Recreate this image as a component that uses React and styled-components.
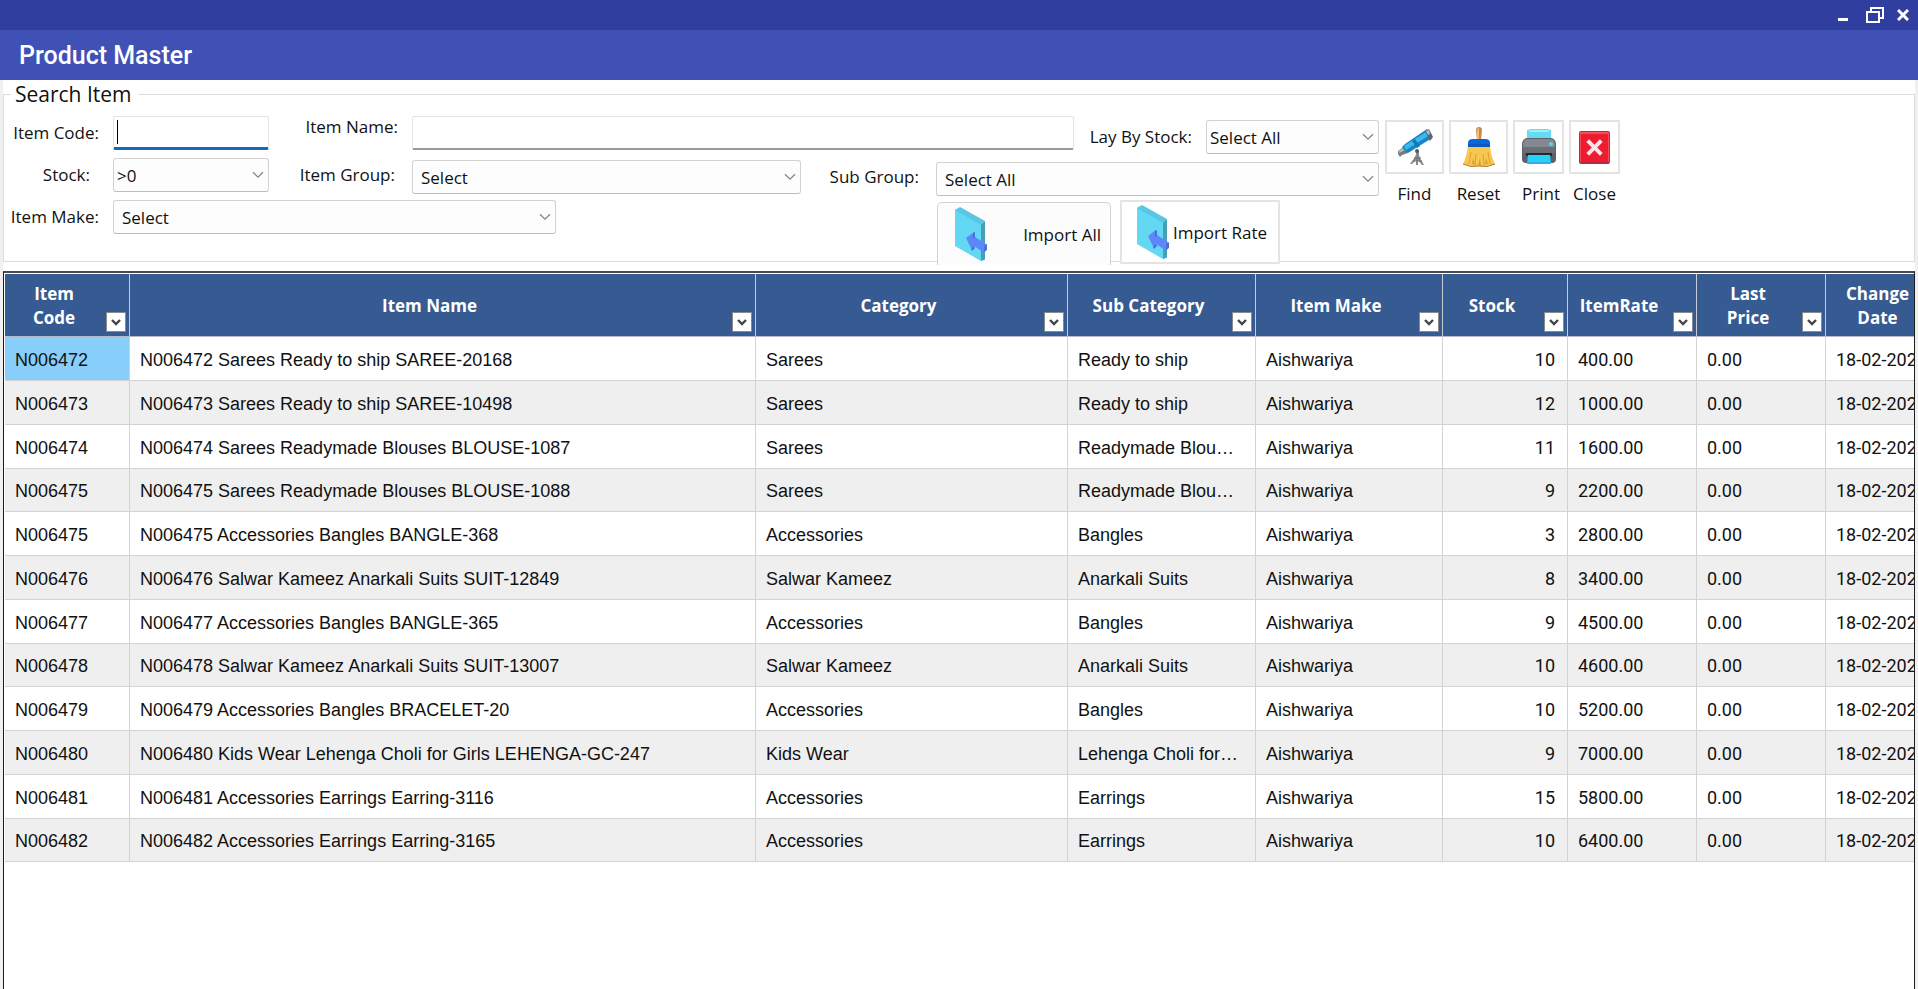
import React from "react";
import styled, { createGlobalStyle } from "styled-components";

const GlobalStyle = createGlobalStyle`
  *, *::before, *::after { box-sizing: border-box; }
  body {
    margin: 0;
    background: #f0f0f0;
    color: #111;
    font-family: "Open Sans", "Noto Sans", sans-serif;
    font-size: 17px;
  }
  button, input, select { font: inherit; color: inherit; }
`;

const Window = styled.div`
  display: flex;
  flex-direction: column;
  min-height: 100vh;
  overflow: hidden;
`;

const TitleBar = styled.div`
  display: flex;
  justify-content: flex-end;
  align-items: center;
  height: 30px;
  background: #303f9f;
`;

const WindowButton = styled.button`
  display: flex;
  align-items: center;
  justify-content: center;
  width: ${(p) => p.$width}px;
  height: 30px;
  padding: 0;
  border: 0;
  background: none;
  color: #fff;
`;

const AppBar = styled.header`
  display: flex;
  align-items: center;
  height: 50px;
  padding: 2px 19px 0;
  background: #3f51b5;
`;

const Title = styled.h1`
  margin: 0;
  color: #fff;
  font-family: Roboto, sans-serif;
  font-size: 25px;
  font-weight: 500;
  line-height: 30px;
`;

const Body = styled.main`
  flex: 1;
  display: flex;
  flex-direction: column;
  margin: 0 3px;
  background: #fff;
`;

const SearchPanel = styled.fieldset`
  margin: 0;
  min-width: 0;
  padding: 8px 0 0;
  border: 1px solid #dcdcdc;
`;

const Legend = styled.legend`
  margin-left: 7px;
  padding: 1px 6px 0 4px;
  font-size: 21px;
  line-height: 27px;
`;

const SearchForm = styled.form`
  display: flex;
  gap: 6px;
`;

const Filters = styled.div`
  flex: 0 1 1375px;
  min-width: 0;
  display: grid;
  grid-template-columns: 109px 156px 143px minmax(120px, 1fr) 135px 138px 132px 173px;
  grid-template-rows: 38px 38px 61px;
  row-gap: 4px;
`;

const Label = styled.label`
  grid-column: ${(p) => p.$column};
  align-self: ${(p) => p.$align || "start"};
  padding-right: ${(p) => p.$inset || 14}px;
  line-height: ${(p) => p.$line || 34}px;
  text-align: right;
  white-space: nowrap;
`;

const Field = styled.div`
  position: relative;
  grid-column: ${(p) => p.$column};
  align-self: ${(p) => p.$align || "start"};
  height: 34px;
  max-width: ${(p) => p.$max || "none"};
`;

const TextInput = styled.input`
  display: block;
  width: 100%;
  height: 34px;
  padding: 0 5px;
  border: 1px solid #e3e3e3;
  border-bottom: ${(p) => (p.$active ? "3px solid #0f6cbd" : "2px solid #999")};
  border-radius: 2px;
  outline: 0;
  background: #fff;
  caret-color: transparent;
`;

const Caret = styled.span`
  position: absolute;
  left: 4px;
  top: 4px;
  width: 1px;
  height: 24px;
  background: #000;
`;

const SelectBox = styled.select`
  appearance: none;
  display: block;
  width: 100%;
  height: 34px;
  padding: 0 28px 0 ${(p) => p.$pad}px;
  border: 1px solid #d2d2d2;
  border-bottom-color: #bdbdbd;
  border-radius: 3px;
  background: #fdfdfd;
`;

const SelectArrow = styled.svg`
  position: absolute;
  right: 5px;
  top: 13px;
  pointer-events: none;
`;

const ImportBar = styled.div`
  grid-column: 6 / 9;
  display: flex;
  align-items: flex-start;
  gap: 9px;
  padding-left: 1px;
`;

const ImportButton = styled.button`
  flex: none;
  display: flex;
  align-items: center;
  justify-content: space-between;
  width: ${(p) => p.$width}px;
  height: ${(p) => (p.$tab ? 63 : 64)}px;
  margin-top: ${(p) => (p.$tab ? 2 : 0)}px;
  padding: 0 ${(p) => (p.$tab ? 9 : 11)}px 0 ${(p) => (p.$tab ? 17 : 15)}px;
  border: ${(p) => (p.$tab ? 1 : 2)}px solid ${(p) => (p.$tab ? "#d2d2d2" : "#e4e4e4")};
  border-bottom-width: ${(p) => (p.$tab ? 0 : 2)}px;
  border-radius: ${(p) => (p.$tab ? "5px 5px 0 0" : "0")};
  background: ${(p) => (p.$tab ? "#fcfcfc" : "#fff")};
  white-space: nowrap;
`;

const Actions = styled.div`
  display: flex;
  align-items: flex-start;
  gap: 5px;
  padding-top: 4px;
`;

const Action = styled.div`
  display: flex;
  flex-direction: column;
  gap: 8px;
  width: ${(p) => p.$width}px;
  line-height: 24px;
`;

const ActionLabel = styled.span`
  padding-left: ${(p) => (p.$shifted ? 5 : 0)}px;
  text-align: center;
`;

const ActionButton = styled.button`
  display: flex;
  align-items: center;
  justify-content: center;
  width: 100%;
  height: 54px;
  padding: 0;
  border: 2px solid #e4e4e4;
  background: #fff;
`;

const GridFrame = styled.section`
  flex: 1;
  margin-top: 9px;
  padding: 1px 0 0 1px;
  overflow: hidden;
  border: 1px solid #1c1c1c;
  border-top: 2px solid #4a4a4a;
  border-bottom: 0;
`;

const Table = styled.table`
  width: calc(100% + 42px);
  table-layout: fixed;
  border-collapse: separate;
  border-spacing: 0;
`;

const HeadCell = styled.th`
  height: 63px;
  padding: 0;
  border-right: 1px solid #c8ccd6;
  border-bottom: 1px solid #b4b9c6;
  background: #365a92;
  color: #fff;
  font-size: 17px;
  font-weight: 700;
  line-height: 24px;
`;

const HeadInner = styled.div`
  display: flex;
  align-items: flex-end;
  height: 62px;
  padding: 0 3px 4px;
`;

const HeadText = styled.span`
  flex: 1;
  align-self: center;
  padding: 6px 8px 0 2px;
  white-space: nowrap;
`;

const FilterButton = styled.button`
  flex: none;
  display: flex;
  align-items: center;
  justify-content: center;
  width: 20px;
  height: 20px;
  padding: 1px 0 0;
  border: 1px solid #8a8a8a;
  background: #fff;
`;

const Row = styled.tr`
  height: 44px;
  background: #fff;
  &:nth-child(even) { background: #efefef; }
  &:nth-child(4n) { height: 43px; }
`;

const Cell = styled.td`
  padding: 2px 12px 0 10px;
  overflow: hidden;
  border-right: 1px solid #d3d3d3;
  border-bottom: 1px solid #d3d3d3;
  background: ${(p) => (p.$selected ? "#87cefa" : "transparent")};
  font-family: ${(p) => (p.$numeric ? "Roboto" : '"Liberation Sans"')}, sans-serif;
  font-size: 18px;
  line-height: 24px;
  text-align: ${(p) => p.$end ? "right" : "left"};
  text-overflow: ellipsis;
  white-space: nowrap;
`;

function Select({ id, column, align, max, pad = 8, children }) {
  return (
    <Field $column={column} $align={align} $max={max}>
      <SelectBox id={id} $pad={pad}>
        <option>{children}</option>
      </SelectBox>
      <SelectArrow width="12" height="8" viewBox="0 0 12 8" aria-hidden="true">
        <path d="M1 1.2 6 6.2 11 1.2" fill="none" stroke="#858585" strokeWidth="1.3" />
      </SelectArrow>
    </Field>
  );
}

function DoorIcon() {
  return (
    <svg width="32" height="54" viewBox="0 0 32 54" aria-hidden="true">
      <path d="M0 3 5 1 30 15v38l-4 1L0 39Z" fill="#63d8f3" />
      <path d="M0 3 5 0 30 14l-4 4Z" fill="#59c6e3" />
      <path d="M26 18 30 14v38l-4 2Z" fill="#489eb6" />
      <path d="M11 31 19 25l1 5 11 7v7l-3 1-9-6-2 4Z" fill="#5e86fb" />
      <path d="m18 26 2-1v6l-2 1Zm11 13 3-2v6l-3 2ZM16 42l3-3 1 2-3 3Z" fill="#4c6edb" />
    </svg>
  );
}

function TelescopeIcon() {
  return (
    <svg width="36" height="38" viewBox="0 0 36 38" aria-hidden="true">
      <path d="M19 22h3v5l1 3 4 7h-2l-4-5v5h-2v-5l-4 4h-2l5-7 1-3Z" fill="#85898c" />
      <path d="M17 30h7M16 33h9" stroke="#686c70" strokeWidth="1" />
      <path d="m1 23 6-4 4 6-6 2-2 2-2-3Z" fill="#737c83" />
      <path d="m2 23 5-3 1 2-6 3Z" fill="#b8c0c5" />
      <path d="m5 19 3-3L30 1l5 9L11 25l-3-2Z" fill="#1687c5" />
      <path d="m7 18 22-14 2 4L9 22Z" fill="#41b6ed" />
      <path d="m15 13 3-2 5 7-3 2Z" fill="#1279b6" />
      <path d="m28 3 4-2 4 8-3 4Z" fill="#566974" />
      <path d="m29 3 3-1 1 4-2 1Z" fill="#a8c0cd" />
      <circle cx="20" cy="23" r="2" fill="#555c61" />
    </svg>
  );
}

function BroomIcon() {
  return (
    <svg width="32" height="40" viewBox="0 0 32 40" aria-hidden="true">
      <path d="M13 3q0-3 3-3t3 3l-1 10h-4Z" fill="#c48c4c" />
      <path d="M14 3q0-2 2-2v11h-2Z" fill="#f0bd6c" />
      <path d="M5 18h22q1 12 5 19-8 4-16 2-9 1-16-2 4-8 5-19Z" fill="#f7c850" />
      <path d="m8 25-2 12M13 27l-1 11M20 27l1 11M25 25l2 12" stroke="#daa03a" strokeWidth="1" />
      <path d="m9 37 1-6 2 7Zm6 1 2-7 1 8Zm7-1 1-6 2 6Z" fill="#dca037" />
      <path d="M0 37q8 4 16 2 8 2 16-2" fill="none" stroke="#b97725" strokeWidth="1" />
      <path d="M5 20v-4q0-4 5-4h12q5 0 5 4v4Z" fill="#0868d7" />
      <path d="M5 17h22v3H5Z" fill="#0b59c2" />
    </svg>
  );
}

function PrinterIcon() {
  return (
    <svg width="34" height="36" viewBox="0 0 34 36" aria-hidden="true">
      <path d="M6 1 8 0h18l2 1 1 11H5Z" fill="#62dcf2" />
      <path d="M8 1h18l1 3H7Z" fill="#8bedf9" />
      <path d="M4 9h26q4 2 4 6v15q0 4-4 4H4q-4 0-4-4V15q0-4 4-6Z" fill="#5d6068" />
      <path d="M4 10h26q3 2 3 6v2H1v-2q0-4 3-6Z" fill="#858891" />
      <path d="M5 1h24v8H5Z" fill="#64dbef" />
      <path d="M7 1h20v2H7Z" fill="#9aeefa" />
      <path d="M1 18h32v6H1Z" fill="#6b6e77" />
      <path d="M4 24h26v3H4Z" fill="#25282f" />
      <path d="M6 26h22l1 9H5Z" fill="#24d2fb" />
      <path d="M6 33h22l1 2H5Z" fill="#36aee3" />
      <circle cx="29" cy="15" r="2" fill="#43dff2" />
    </svg>
  );
}

function CloseIcon() {
  return (
    <svg width="31" height="33" viewBox="0 0 32 34" aria-hidden="true">
      <rect x="0" y="0" width="32" height="34" rx="2" fill="#b52c45" />
      <rect x="1" y="1" width="30" height="31" rx="1" fill="#f15362" />
      <rect x="2" y="3" width="28" height="29" fill="#ed1c2e" />
      <path d="m9 10 14 14M23 10 9 24" stroke="#f7e9ee" strokeWidth="4" />
    </svg>
  );
}

const columns = [
  { title: ["Item", "Code"], width: 125 },
  { title: ["Item Name"] },
  { title: ["Category"], width: 312 },
  { title: ["Sub Category"], width: 188 },
  { title: ["Item Make"], width: 187 },
  { title: ["Stock"], width: 125, numeric: true, end: true },
  { title: ["ItemRate"], width: 129, numeric: true },
  { title: ["Last", "Price"], width: 129, numeric: true },
  { title: ["Change", "Date"], width: 130, numeric: true },
];

const items = [
  ["N006472", "Sarees Ready to ship SAREE-20168", "Sarees", "Ready to ship", 10, "400.00"],
  ["N006473", "Sarees Ready to ship SAREE-10498", "Sarees", "Ready to ship", 12, "1000.00"],
  ["N006474", "Sarees Readymade Blouses BLOUSE-1087", "Sarees", "Readymade Blouses", 11, "1600.00"],
  ["N006475", "Sarees Readymade Blouses BLOUSE-1088", "Sarees", "Readymade Blouses", 9, "2200.00"],
  ["N006475", "Accessories Bangles BANGLE-368", "Accessories", "Bangles", 3, "2800.00"],
  ["N006476", "Salwar Kameez Anarkali Suits SUIT-12849", "Salwar Kameez", "Anarkali Suits", 8, "3400.00"],
  ["N006477", "Accessories Bangles BANGLE-365", "Accessories", "Bangles", 9, "4500.00"],
  ["N006478", "Salwar Kameez Anarkali Suits SUIT-13007", "Salwar Kameez", "Anarkali Suits", 10, "4600.00"],
  ["N006479", "Accessories Bangles BRACELET-20", "Accessories", "Bangles", 10, "5200.00"],
  ["N006480", "Kids Wear Lehenga Choli for Girls LEHENGA-GC-247", "Kids Wear", "Lehenga Choli for Girls", 9, "7000.00"],
  ["N006481", "Accessories Earrings Earring-3116", "Accessories", "Earrings", 15, "5800.00"],
  ["N006482", "Accessories Earrings Earring-3165", "Accessories", "Earrings", 10, "6400.00"],
];

const toCells = ([code, name, category, sub, stock, rate]) => [
  code, `${code} ${name}`, category, sub, "Aishwariya", stock, rate, "0.00", "18-02-2025",
];

const actions = [
  { name: "Find", width: 59, icon: <TelescopeIcon /> },
  { name: "Reset", width: 59, icon: <BroomIcon /> },
  { name: "Print", width: 51, icon: <PrinterIcon />, shifted: true },
  { name: "Close", width: 51, icon: <CloseIcon /> },
];

export default function App() {
  return (
    <Window>
      <GlobalStyle />
      <TitleBar>
        <WindowButton $width={38} aria-label="Minimize">
          <svg width="10" height="18" viewBox="0 0 10 18">
            <path d="M0 13.5h10" stroke="currentColor" strokeWidth="3" />
          </svg>
        </WindowButton>
        <WindowButton $width={26} aria-label="Restore">
          <svg width="18" height="16" viewBox="0 0 18 16" fill="none" stroke="currentColor" strokeWidth="2">
            <path d="M1 5h12v10H1ZM5 5V1h12v10h-4" />
          </svg>
        </WindowButton>
        <WindowButton $width={30} aria-label="Close window">
          <svg width="12" height="12" viewBox="0 0 12 12">
            <path d="m1 1 10 10M11 1 1 11" stroke="currentColor" strokeWidth="3" />
          </svg>
        </WindowButton>
      </TitleBar>
      <AppBar>
        <Title>Product Master</Title>
      </AppBar>
      <Body>
        <SearchPanel>
          <Legend>Search Item</Legend>
          <SearchForm onSubmit={(e) => e.preventDefault()}>
            <Filters>
              <Label htmlFor="code" $column="1">Item Code:</Label>
              <Field $column="2">
                <TextInput id="code" $active />
                <Caret />
              </Field>
              <Label htmlFor="name" $column="3" $line={22}>Item Name:</Label>
              <Field $column="4 / 7">
                <TextInput id="name" />
              </Field>
              <Label htmlFor="layby" $column="7" $align="end">Lay By Stock:</Label>
              <Select id="layby" column="8" align="end" pad={3}>Select All</Select>

              <Label htmlFor="stock" $column="1" $inset={23}>Stock:</Label>
              <Select id="stock" column="2" pad={3}>{">0"}</Select>
              <Label htmlFor="group" $column="3" $inset={17}>Item Group:</Label>
              <Select id="group" column="4" align="center">Select</Select>
              <Label htmlFor="sub" $column="5" $inset={17} $align="center">Sub Group:</Label>
              <Select id="sub" column="6 / 9" align="end">Select All</Select>

              <Label htmlFor="make" $column="1">Item Make:</Label>
              <Select id="make" column="2 / 5" max="443px">Select</Select>
              <ImportBar>
                <ImportButton type="button" $width={174} $tab>
                  <DoorIcon />
                  Import All
                </ImportButton>
                <ImportButton type="button" $width={160}>
                  <DoorIcon />
                  Import Rate
                </ImportButton>
              </ImportBar>
            </Filters>
            <Actions>
              {actions.map((a) => (
                <Action key={a.name} $width={a.width}>
                  <ActionButton type="button" aria-labelledby={`act-${a.name}`}>{a.icon}</ActionButton>
                  <ActionLabel id={`act-${a.name}`} $shifted={a.shifted}>{a.name}</ActionLabel>
                </Action>
              ))}
            </Actions>
          </SearchForm>
        </SearchPanel>
        <GridFrame>
          <Table>
            <colgroup>
              {columns.map((c, i) => <col key={i} width={c.width} />)}
            </colgroup>
            <thead>
              <tr>
                {columns.map((c) => (
                  <HeadCell key={c.title.join(" ")} scope="col">
                    <HeadInner>
                      <HeadText>
                        {c.title[0]}
                        {c.title[1] && <><br />{c.title[1]}</>}
                      </HeadText>
                      <FilterButton type="button" aria-label={`Filter ${c.title.join(" ")}`}>
                        <svg width="10" height="7" viewBox="0 0 10 7">
                          <path d="m1 1 4 4 4-4" fill="none" stroke="#444" strokeWidth="2.4" />
                        </svg>
                      </FilterButton>
                    </HeadInner>
                  </HeadCell>
                ))}
              </tr>
            </thead>
            <tbody>
              {items.map((item, r) => (
                <Row key={r}>
                  {toCells(item).map((value, c) => (
                    <Cell
                      key={c}
                      $numeric={columns[c].numeric}
                      $end={columns[c].end}
                      $selected={r === 0 && c === 0}
                    >
                      {value}
                    </Cell>
                  ))}
                </Row>
              ))}
            </tbody>
          </Table>
        </GridFrame>
      </Body>
    </Window>
  );
}
